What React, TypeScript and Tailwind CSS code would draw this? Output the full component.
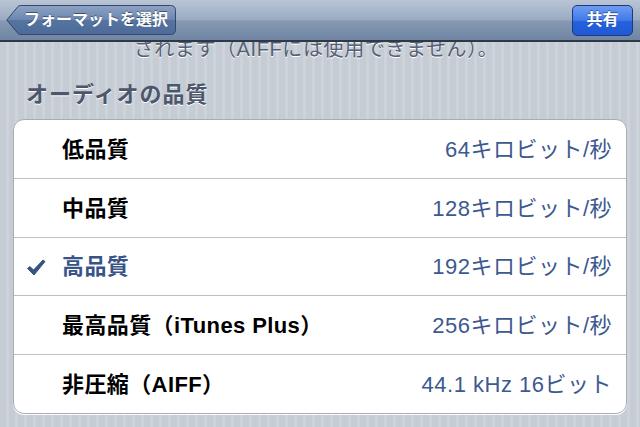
import React from "react"

type Row = { label: string; value: string; checked?: boolean; h: string }

const ROWS: Row[] = [
  { label: "低品質", value: "64キロビット/秒", h: "h-[59px]" },
  { label: "中品質", value: "128キロビット/秒", h: "h-[59px]" },
  { label: "高品質", value: "192キロビット/秒", checked: true, h: "h-[58px]" },
  { label: "最高品質（iTunes Plus）", value: "256キロビット/秒", h: "h-[59px]" },
  { label: "非圧縮（AIFF）", value: "44.1 kHz 16ビット", h: "h-[58px]" },
]

const FONT = "font-['Liberation_Sans','Noto_Sans_CJK_JP',sans-serif]"

function BackButton() {
  return (
    <button className="relative ml-[6px] h-[30px] w-[170px] text-left">
      {/* arrow-shaped button body */}
      <svg className="absolute inset-0" width="170" height="30" viewBox="0 0 170 30">
        <defs>
          <linearGradient id="bb" x1="0" y1="0" x2="0" y2="1">
            <stop offset="0" stopColor="#8ea3c4" />
            <stop offset="0.5" stopColor="#6a86b1" />
            <stop offset="0.5" stopColor="#56749f" />
            <stop offset="1" stopColor="#4c6b99" />
          </linearGradient>
        </defs>
        <path
          d="M0.8 15 L12 1.5 Q12.8 0.5 14.5 0.5 L164.5 0.5 Q169.5 0.5 169.5 5.5 L169.5 24.5 Q169.5 29.5 164.5 29.5 L14.5 29.5 Q12.8 29.5 12 28.5 Z"
          fill="url(#bb)"
          stroke="#34476a"
          strokeWidth="1"
        />
      </svg>
      <span className="relative block pl-[18px] text-[16px] leading-[30px] font-bold text-white [text-shadow:0_-1px_0_rgba(0,0,0,0.45)]">
        フォーマットを選択
      </span>
    </button>
  )
}

function Check() {
  return (
    <svg width="20" height="17" viewBox="0 0 20 17">
      <path
        d="M1.5 9.5 L4 7.5 L7.5 11 L17 1 L19 2.5 L8 16 Z"
        fill="#385487"
        stroke="#385487"
        strokeWidth="1"
        strokeLinejoin="round"
      />
    </svg>
  )
}

export default function App() {
  return (
    <div
      className={`${FONT} w-[640px] h-[427px] overflow-hidden bg-[repeating-linear-gradient(90deg,#c5ccd4_0px,#c5ccd4_6px,#cdd3da_6px,#cdd3da_9px)]`}
    >
      {/* Nav bar */}
      <div className="relative z-10 flex h-[42px] items-center justify-between border-b-2 border-[#2e3846] bg-[linear-gradient(180deg,#b9c5d5_0%,#9aabc2_50%,#8799b3_52%,#6f85a3_100%)]">
        <BackButton />
        <button className="mr-[7px] h-[31px] w-[61px] rounded-[5px] border border-[#1d3a7c] bg-[linear-gradient(180deg,#6f9cf0_0%,#3f79e9_50%,#2562de_52%,#2158d4_100%)] text-[16px] font-bold text-white [text-shadow:0_-1px_0_rgba(0,0,0,0.4)]">
          共有
        </button>
      </div>

      {/* Footer text of previous group, scrolled under the nav bar */}
      <div className="h-[20px] overflow-hidden">
        <p className="-mt-[6px] pr-[8px] text-center text-[20px] leading-[26px] tracking-[0.6px] text-[#556075] [text-shadow:0_1px_0_#ffffff]">
          されます（AIFFには使用できません）。
        </p>
      </div>

      {/* Section header */}
      <h2 className="mt-[18px] pl-[26px] text-[22px] leading-[30px] font-bold tracking-[1px] text-[#4c566c] [text-shadow:0_1px_0_#ffffff]">
        オーディオの品質
      </h2>

      {/* Grouped table */}
      <div className="mx-[13px] mt-[9px] overflow-hidden rounded-[11px] border border-[#a9adb3] bg-white shadow-[0_1px_0_#ffffff]">
        {ROWS.map((row, i) => (
          <div
            key={row.label}
            className={`flex items-center ${row.h} ${i < ROWS.length - 1 ? "border-b border-[#c0c0c0]" : ""}`}
          >
            <div className="flex w-[48px] shrink-0 items-center pl-[12px] pt-[2px]">
              {row.checked && <Check />}
            </div>
            <span
              className={`text-[22px] font-bold tracking-[0.4px] ${row.checked ? "text-[#385487]" : "text-black"}`}
            >
              {row.label}
            </span>
            <span className="ml-auto pr-[14px] text-[22px] tracking-[0.5px] text-[#3d5990]">{row.value}</span>
          </div>
        ))}
      </div>
    </div>
  )
}
